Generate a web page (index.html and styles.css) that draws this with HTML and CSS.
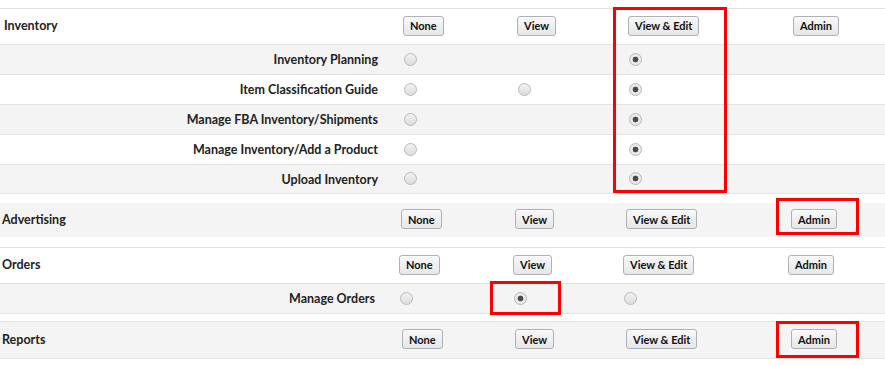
FILE: index.html
```html
<!DOCTYPE html>
<html lang="en">
  <head>
    <meta charset="UTF-8" />
    <meta name="viewport" content="width=device-width, initial-scale=1.0" />
    <title>User Permissions</title>
    <link rel="stylesheet" href="styles.css">
  </head>
  <body>
    <div class="page">
      <section class="group group_inventory">
        <div class="row head">
          <div class="label">Inventory</div>
          <div class="cell"><button class="perm_button">None</button></div>
          <div class="cell"><button class="perm_button">View</button></div>
          <div class="cell"><button class="perm_button">View &amp; Edit</button></div>
          <div class="cell"><button class="perm_button">Admin</button></div>
        </div>
        <div class="row sub alt">
          <div class="label">Inventory Planning</div>
          <div class="cell"><input type="radio" name="inv1" /></div>
          <div class="cell"></div>
          <div class="cell"><input type="radio" name="inv1" checked /></div>
          <div class="cell"></div>
        </div>
        <div class="row sub">
          <div class="label">Item Classification Guide</div>
          <div class="cell"><input type="radio" name="inv2" /></div>
          <div class="cell"><input type="radio" name="inv2" /></div>
          <div class="cell"><input type="radio" name="inv2" checked /></div>
          <div class="cell"></div>
        </div>
        <div class="row sub alt">
          <div class="label">Manage FBA Inventory/Shipments</div>
          <div class="cell"><input type="radio" name="inv3" /></div>
          <div class="cell"></div>
          <div class="cell"><input type="radio" name="inv3" checked /></div>
          <div class="cell"></div>
        </div>
        <div class="row sub">
          <div class="label">Manage Inventory/Add a Product</div>
          <div class="cell"><input type="radio" name="inv4" /></div>
          <div class="cell"></div>
          <div class="cell"><input type="radio" name="inv4" checked /></div>
          <div class="cell"></div>
        </div>
        <div class="row sub alt last">
          <div class="label">Upload Inventory</div>
          <div class="cell"><input type="radio" name="inv5" /></div>
          <div class="cell"></div>
          <div class="cell"><input type="radio" name="inv5" checked /></div>
          <div class="cell"></div>
        </div>
      </section>

      <section class="group group_advertising">
        <div class="row head alt">
          <div class="label">Advertising</div>
          <div class="cell"><button class="perm_button">None</button></div>
          <div class="cell"><button class="perm_button">View</button></div>
          <div class="cell"><button class="perm_button">View &amp; Edit</button></div>
          <div class="cell"><button class="perm_button">Admin</button></div>
        </div>
      </section>

      <section class="group group_orders">
        <div class="row head">
          <div class="label">Orders</div>
          <div class="cell"><button class="perm_button">None</button></div>
          <div class="cell"><button class="perm_button">View</button></div>
          <div class="cell"><button class="perm_button">View &amp; Edit</button></div>
          <div class="cell"><button class="perm_button">Admin</button></div>
        </div>
        <div class="row sub alt">
          <div class="label">Manage Orders</div>
          <div class="cell"><input type="radio" name="ord1" /></div>
          <div class="cell"><input type="radio" name="ord1" checked /></div>
          <div class="cell"><input type="radio" name="ord1" /></div>
          <div class="cell"></div>
        </div>
      </section>

      <section class="group group_reports">
        <div class="row head alt">
          <div class="label">Reports</div>
          <div class="cell"><button class="perm_button">None</button></div>
          <div class="cell"><button class="perm_button">View</button></div>
          <div class="cell"><button class="perm_button">View &amp; Edit</button></div>
          <div class="cell"><button class="perm_button">Admin</button></div>
        </div>
      </section>

      <!-- red annotation boxes drawn over the table -->
      <div class="mark mark_inventory"></div>
      <div class="mark mark_adv_admin"></div>
      <div class="mark mark_orders_view"></div>
      <div class="mark mark_reports_admin"></div>
    </div>
  </body>
</html>
```

FILE: styles.css
```css
* {
  box-sizing: border-box;
}
body {
  margin: 0;
  font-family: Lato, "Open Sans", Arial, sans-serif;
  font-weight: 700;
  color: #222;
  background: #fff;
}
.page {
  position: relative;
  padding-top: 8px;
  width: 885px;
}
.group {
  --lead: 401px;
  --c2: 114px;
  --c3: 111px;
  --c4: 165px;
}
.group_inventory {
  --lead: 403px;
  border-top: 1px solid #e3e3e3;
}
.group_advertising {
  margin-top: 9px;
}
.group_orders {
  --lead: 399px;
  --c3: 110px;
  margin-top: 10px;
  border-top: 1px solid #e3e3e3;
}
.group_reports {
  --lead: 402px;
  --c2: 113px;
  margin-top: 7px;
  border-top: 1px solid #e3e3e3;
}
.row {
  display: grid;
  grid-template-columns: var(--lead) var(--c2) var(--c3) var(--c4) 1fr;
  align-items: center;
  border-bottom: 1px solid #e3e3e3;
}
.row.alt {
  background-color: #f4f4f4;
}
.group_advertising .row {
  border-bottom: none;
  height: 34px;
}
.head {
  height: 36px;
}
.group_reports .head {
  height: 37px;
}
.sub {
  height: 30px;
}
.sub.last {
  height: 29px;
}
.label {
  font-size: 12.5px;
}
.head .label {
  padding-left: 2px;
  padding-bottom: 2px;
}
.group_inventory .head .label {
  padding-left: 4px;
}
.sub .label {
  text-align: right;
  padding-right: 25px;
}
.group_orders .sub .label {
  padding-right: 24px;
}
.cell {
  display: flex;
  align-items: center;
}
.perm_button {
  height: 20px;
  margin-bottom: 2px;
  padding: 0 6px;
  font-family: Lato, "Open Sans", Arial, sans-serif;
  font-size: 11px;
  font-weight: 700;
  color: #111;
  background: linear-gradient(#f8f8f9, #e6e7e9);
  border: 1px solid #aeb1b6;
  border-radius: 3px;
  box-shadow: 0 1px 0 rgba(255, 255, 255, 0.7) inset;
}
input[type="radio"] {
  appearance: none;
  margin: 0 0 1px 1px;
  width: 13px;
  height: 13px;
  border: 1px solid #b9b9b9;
  border-radius: 50%;
  background: linear-gradient(#f2f2f2, #dddddd);
}
input[type="radio"]:checked {
  background: radial-gradient(circle, #4a4a4a 0 2.6px, #e9e9e9 3.2px);
}
.mark {
  position: absolute;
  border: 3px solid #ff0000;
}
.mark_inventory {
  left: 613px;
  top: 7px;
  width: 114px;
  height: 186px;
}
.mark_adv_admin {
  left: 776px;
  top: 198px;
  width: 83px;
  height: 37px;
}
.mark_orders_view {
  left: 490px;
  top: 281px;
  width: 71px;
  height: 34px;
}
.mark_reports_admin {
  left: 776px;
  top: 321px;
  width: 83px;
  height: 37px;
}
```
